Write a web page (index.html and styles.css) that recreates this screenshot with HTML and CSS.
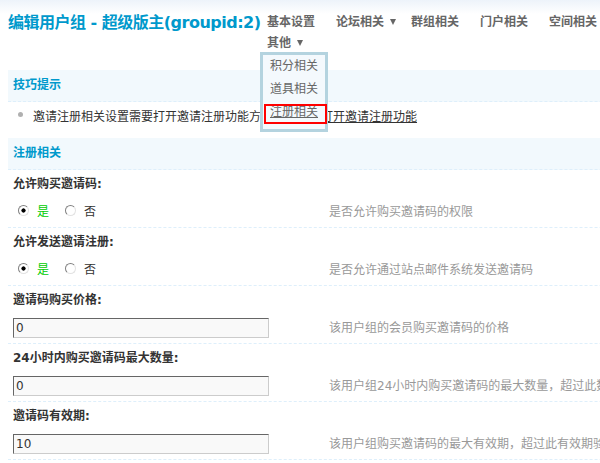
FILE: index.html
```html
<!DOCTYPE html>
<html lang="zh-CN">
<head>
    <meta charset="UTF-8">
    <title>编辑用户组 - 超级版主</title>
    <link rel="stylesheet" href="styles.css">
</head>
<body>
<!-- 标题和分类导航 -->
<div class="floattop">
    <h3 class="title">编辑用户组 - 超级版主(groupid:2)</h3>
    <ul class="tab">
        <li><a href="#">基本设置</a></li>
        <li><a href="#">论坛相关</a><em class="arrow"></em></li>
        <li><a href="#">群组相关</a></li>
        <li><a href="#">门户相关</a></li>
        <li><a href="#">空间相关</a></li>
        <li><a href="#">其他</a><em class="arrow"></em>
            <ul class="dropmenu">
                <li><a href="#">积分相关</a></li>
                <li><a href="#">道具相关</a></li>
                <li class="current"><a href="#">注册相关</a></li>
            </ul>
        </li>
    </ul>
</div>

<!-- 技巧提示 -->
<div class="tb">
    <div class="partition">技巧提示</div>
    <ul class="tipsblock">
        <li>邀请注册相关设置需要打开邀请注册功能方有效，<a href="#">点此打开邀请注册功能</a></li>
    </ul>
</div>

<!-- 注册相关 -->
<div class="tb">
    <div class="partition">注册相关</div>

    <div class="setting-label">允许购买邀请码:</div>
    <div class="setting-row">
        <div class="rowform radios">
            <label class="checked"><input type="radio" name="allowbuyinvitecode" checked>是</label>
            <label><input type="radio" name="allowbuyinvitecode">否</label>
        </div>
        <div class="tips2">是否允许购买邀请码的权限</div>
    </div>

    <div class="setting-label">允许发送邀请注册:</div>
    <div class="setting-row">
        <div class="rowform radios">
            <label class="checked"><input type="radio" name="allowmailinvite" checked>是</label>
            <label><input type="radio" name="allowmailinvite">否</label>
        </div>
        <div class="tips2">是否允许通过站点邮件系统发送邀请码</div>
    </div>

    <div class="setting-label">邀请码购买价格:</div>
    <div class="setting-row">
        <div class="rowform"><input class="txt" type="text" value="0"></div>
        <div class="tips2">该用户组的会员购买邀请码的价格</div>
    </div>

    <div class="setting-label">24小时内购买邀请码最大数量:</div>
    <div class="setting-row">
        <div class="rowform"><input class="txt" type="text" value="0"></div>
        <div class="tips2">该用户组24小时内购买邀请码的最大数量，超过此数量将不能继续购买，0 为不限制</div>
    </div>

    <div class="setting-label">邀请码有效期:</div>
    <div class="setting-row">
        <div class="rowform"><input class="txt" type="text" value="10"></div>
        <div class="tips2">该用户组购买邀请码的最大有效期，超过此有效期验证码将自动失效</div>
    </div>
</div>
</body>
</html>
```

FILE: styles.css
```css
body {
    margin: 0;
    padding: 0 0 0 8px;
    width: 760px;
    overflow: hidden;
    font: 12px "DejaVu Sans", "Noto Sans CJK SC", sans-serif;
    color: #333;
    background: #fff linear-gradient(#edf3fa, #fff 14px) no-repeat;
}

/* Top title + tabs */
.floattop {
    display: flex;
    padding-top: 12px;
    margin-bottom: 16px;
}

.title {
    margin: 0;
    width: 259px;
    font-size: 16px;
    font-weight: bold;
    line-height: 21px;
    letter-spacing: -0.5px;
    color: #09c;
    white-space: nowrap;
}

.tab {
    display: flex;
    flex-wrap: wrap;
    width: 360px;
    margin: 0;
    padding: 0;
    list-style: none;
}

.tab > li {
    position: relative;
    margin-right: 21px;
    line-height: 21px;
    font-weight: bold;
}

.tab a {
    color: #666;
    text-decoration: none;
}

.arrow {
    display: inline-block;
    vertical-align: middle;
    margin: -2px -6px 0 6px;
    border-style: solid;
    border-width: 6px 3px 0;
    border-color: #666 transparent transparent;
}

/* dropdown under "其他" */
.dropmenu {
    position: absolute;
    top: 19px;
    left: -7px;
    z-index: 10;
    width: 62px;
    margin: 0;
    padding: 0 0 5px;
    list-style: none;
    border: 3px solid #b4d3df;
    background: #f4f9fd;
    font-weight: normal;
}

.dropmenu li {
    position: relative;
    height: 23px;
    line-height: 23px;
}

.dropmenu a {
    display: block;
    padding-left: 7px;
    white-space: nowrap;
}

.dropmenu .current a {
    text-decoration: underline;
}

.dropmenu .current::after {
    content: "";
    position: absolute;
    top: 3px;
    left: 1px;
    right: -2px;
    bottom: 0;
    border: 2px solid #f00;
}

/* Sections */
.partition {
    height: 31px;
    line-height: 31px;
    padding-left: 5px;
    background: #f2f9fd;
    color: #09c;
    font-weight: bold;
    border-bottom: 1px dashed #deeffb;
}

.tipsblock {
    margin: 0 0 6px;
    padding: 0;
    list-style: none;
}

.tipsblock li {
    position: relative;
    padding-left: 25px;
    line-height: 30px;
    white-space: nowrap;
}

.tipsblock li::before {
    content: "";
    position: absolute;
    left: 10px;
    top: 10px;
    width: 5px;
    height: 5px;
    border-radius: 50%;
    background: #b0b0b0;
}

.tipsblock a {
    color: #333;
}

.setting-label {
    height: 28px;
    line-height: 28px;
    padding-left: 5px;
    font-weight: bold;
}

.setting-row {
    display: flex;
    align-items: flex-start;
    height: 25px;
    padding-top: 4px;
    border-bottom: 1px dashed #deeffb;
}

.rowform {
    width: 316px;
    padding-left: 5px;
    flex-shrink: 0;
}

.radios {
    display: flex;
    align-items: center;
    height: 16px;
}

.radios label {
    display: flex;
    align-items: center;
    margin-right: 16px;
}

.radios label:first-child {
    margin-left: 5px;
}

.radios input {
    appearance: none;
    width: 11px;
    height: 11px;
    margin: 0 8px 0 0;
    border: 1px solid;
    border-color: #808080 #e2e2e2 #e2e2e2 #808080;
    border-radius: 50%;
    background: #fff;
}

.radios input:checked {
    background: radial-gradient(circle, #000 0 1.8px, #fff 2.4px);
}

.checked {
    color: #0c0;
}

.txt {
    box-sizing: border-box;
    width: 256px;
    height: 20px;
    margin: 0;
    padding: 0 2px;
    border: 1px solid;
    border-color: #666 #ccc #ccc #666;
    background: #f9f9f9;
    font: inherit;
    color: #333;
}

.tips2 {
    line-height: 20px;
    color: #999;
    white-space: nowrap;
}
```
